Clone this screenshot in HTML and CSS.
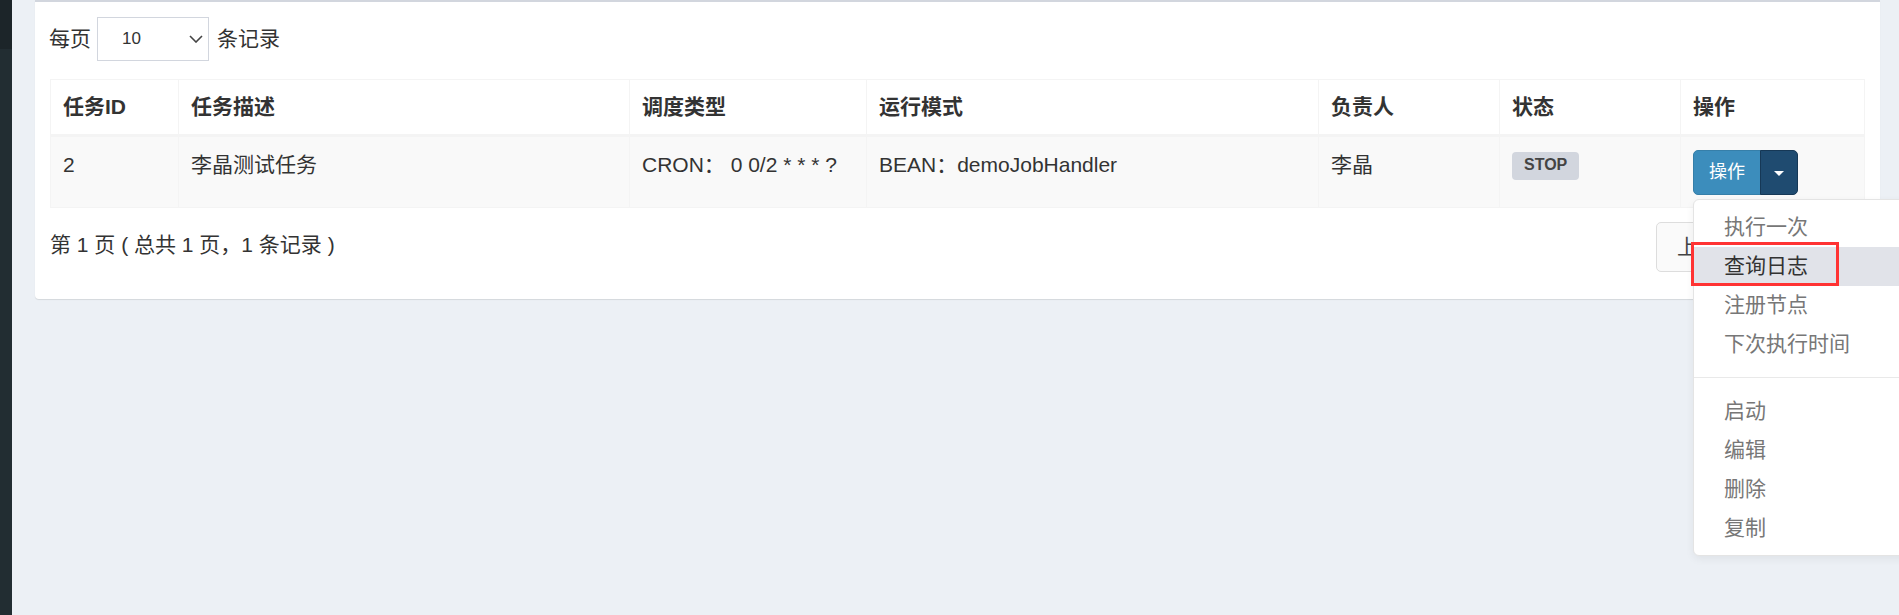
FILE: index.html
```html
<!DOCTYPE html>
<html>

<head>
	<meta charset="utf-8">
	<title>任务管理</title>
	<link rel="stylesheet" href="styles.css">
</head>

<body>
	<div class="sidebar"></div>
	<div class="content">
		<div class="box">
			<div class="length">
				<span>每页</span>
				<div class="select">
					<span>10</span>
					<svg width="14" height="8" viewBox="0 0 14 8"><path d="M1 1l6 6 6-6" fill="none" stroke="#444" stroke-width="1.6"/></svg>
				</div>
				<span>条记录</span>
			</div>

			<table class="jobs">
				<colgroup>
					<col class="c-id">
					<col class="c-desc">
					<col class="c-type">
					<col class="c-mode">
					<col class="c-owner">
					<col class="c-status">
					<col class="c-op">
				</colgroup>
				<thead>
					<tr>
						<th>任务ID</th>
						<th>任务描述</th>
						<th>调度类型</th>
						<th>运行模式</th>
						<th>负责人</th>
						<th>状态</th>
						<th>操作</th>
					</tr>
				</thead>
				<tbody>
					<tr>
						<td>2</td>
						<td>李晶测试任务</td>
						<td>CRON：&nbsp;0 0/2 * * * ?</td>
						<td>BEAN：demoJobHandler</td>
						<td>李晶</td>
						<td><span class="label">STOP</span></td>
						<td>
							<div class="btn-group">
								<button type="button" class="btn">操作</button>
								<button type="button" class="btn toggle"><span class="caret"></span></button>
								<ul class="menu">
									<li><a>执行一次</a></li>
									<li class="hover"><a>查询日志</a><span class="mark"></span></li>
									<li><a>注册节点</a></li>
									<li><a>下次执行时间</a></li>
									<li class="divider"></li>
									<li><a>启动</a></li>
									<li><a>编辑</a></li>
									<li><a>删除</a></li>
									<li><a>复制</a></li>
								</ul>
							</div>
						</td>
					</tr>
				</tbody>
			</table>

			<div class="footer">
				<div class="info">第 1 页 ( 总共 1 页，1 条记录 )</div>
				<ul class="pager">
					<li>上一页</li>
					<li>下一页</li>
				</ul>
			</div>
		</div>
	</div>
</body>

</html>
```

FILE: styles.css
```css
html,
body {
	height: 100%;
	overflow: hidden;
}

body {
	margin: 0;
	display: flex;
	background: #ecf0f5;
	color: #333;
	font-family: "Liberation Sans", "Noto Sans CJK SC", sans-serif;
	font-size: 21px;
	line-height: 30px;
}

.sidebar {
	width: 12px;
	flex: none;
	background: linear-gradient(#1c2529 0 49px, #222d32 49px);
}

.content {
	flex: 1;
	padding: 0 19px 0 23px;
}

.box {
	background: #fff;
	border-top: 2px solid #d2d6de;
	border-radius: 0 0 4px 4px;
	box-shadow: 0 1px 1px rgba(0, 0, 0, 0.1);
	padding: 15px 15px 15px;
}

/* page size */
.length {
	display: flex;
	align-items: center;
	height: 44px;
	margin-left: -1px;
}

.select {
	width: 112px;
	height: 44px;
	box-sizing: border-box;
	border: 1px solid #d2d6de;
	margin: 0 8px 0 6px;
	padding: 0 5px 0 24px;
	display: flex;
	align-items: center;
	justify-content: space-between;
	font-size: 17px;
}

/* table */
.jobs {
	width: 100%;
	margin-top: 18px;
	border-collapse: collapse;
	table-layout: fixed;
	border: 1px solid #f4f4f4;
}

.c-id { width: 128px; }
.c-desc { width: 451px; }
.c-type { width: 237px; }
.c-mode { width: 452px; }
.c-owner { width: 181px; }
.c-status { width: 181px; }

.jobs th,
.jobs td {
	border: 1px solid #f4f4f4;
	padding: 12px;
	text-align: left;
	vertical-align: top;
	white-space: nowrap;
}

.jobs th {
	font-weight: bold;
	border-bottom-width: 3px;
}

.jobs td {
	padding-top: 13px;
}

.jobs tbody tr {
	background: #f9f9f9;
}

.label {
	display: inline-block;
	background: #d2d6de;
	color: #444;
	font-weight: bold;
	font-size: 16px;
	line-height: 20px;
	padding: 3px 12px 5px;
	border-radius: 4px;
	margin-top: 2px;
	vertical-align: top;
}

/* buttons */
.btn-group {
	position: relative;
	display: inline-flex;
	vertical-align: top;
}

.btn {
	font: inherit;
	font-size: 18px;
	line-height: 27px;
	padding: 8px 15px;
	color: #fff;
	background: #3c8dbc;
	border: 1px solid #367fa9;
	border-radius: 5px 0 0 5px;
}

.btn.toggle {
	margin-left: -1px;
	padding: 8px 13px;
	background: #1f4b70;
	border-color: #163856;
	border-radius: 0 5px 5px 0;
}

.caret {
	display: inline-block;
	vertical-align: middle;
	border-top: 5px solid #fff;
	border-left: 5px solid transparent;
	border-right: 5px solid transparent;
}

.menu {
	position: absolute;
	top: 100%;
	left: 0;
	z-index: 10;
	margin: 4px 0 0;
	padding: 7.5px 0;
	list-style: none;
	min-width: 260px;
	background: #fff;
	border: 1px solid #e4e4e4;
	border-radius: 6px;
	box-shadow: 0 3px 8px rgba(0, 0, 0, 0.06);
}

.menu li {
	position: relative;
}

.menu li a {
	display: block;
	padding: 4.5px 30px;
	line-height: 30px;
	color: #777;
	white-space: nowrap;
}

.menu li.hover a {
	background: #e1e3e9;
	color: #333;
}

.menu .divider {
	height: 1px;
	margin: 13.5px 0;
	background: #e9e9e9;
}

.mark {
	position: absolute;
	left: -3px;
	top: -5px;
	width: 148px;
	height: 44px;
	box-sizing: border-box;
	border: 3px solid #f33;
}

/* footer */
.footer {
	display: flex;
	justify-content: space-between;
	margin: 14px 0 12px;
}

.info {
	padding-top: 8px;
}

.pager {
	display: flex;
	margin: 0;
	padding: 0;
	list-style: none;
}

.pager li {
	padding: 9px 20px;
	border: 1px solid #ddd;
	background: #fafafa;
	color: #444;
}

.pager li:first-child {
	border-radius: 5px 0 0 5px;
}

.pager li + li {
	margin-left: -1px;
	border-radius: 0 5px 5px 0;
}
```
